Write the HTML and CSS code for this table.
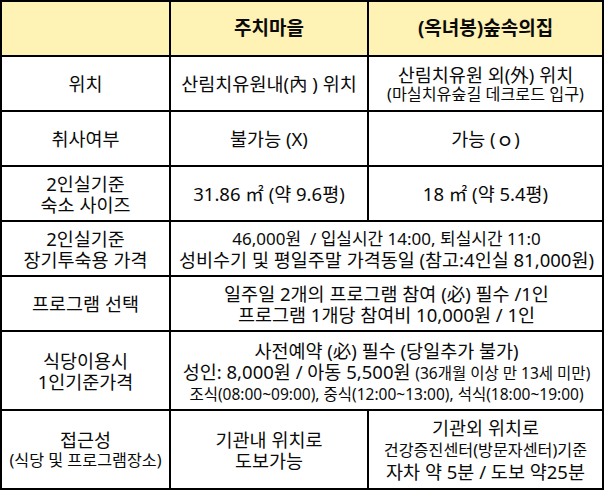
FILE: index.html
```html
<!DOCTYPE html>
<html lang="ko">
<head>
<meta charset="utf-8">
<link rel="stylesheet" href="styles.css">
</head>
<body>
<table class="info">
  <colgroup>
    <col class="c1">
    <col class="c2">
    <col class="c3">
  </colgroup>
  <tr class="r-head">
    <th class="head"></th>
    <th class="head">주치마을</th>
    <th class="head">(옥녀봉)숲속의집</th>
  </tr>
  <tr class="r-std">
    <td>위치</td>
    <td>산림치유원내(內 ) 위치</td>
    <td><div class="ln">산림치유원 외(外) 위치</div><div class="ln sm tight">(마실치유숲길 데크로드 입구)</div></td>
  </tr>
  <tr class="r-std">
    <td>취사여부</td>
    <td>불가능 (X)</td>
    <td>가능 (ｏ)</td>
  </tr>
  <tr class="r-std">
    <td><div class="ln">2인실기준</div><div class="ln">숙소 사이즈</div></td>
    <td>31.86 ㎡ (약 9.6평)</td>
    <td>18 ㎡ (약 5.4평)</td>
  </tr>
  <tr class="r-std">
    <td><div class="ln">2인실기준</div><div class="ln">장기투숙용 가격</div></td>
    <td colspan="2"><div class="ln md">46,000원&nbsp; / 입실시간 14:00, 퇴실시간 11:0</div><div class="ln">성비수기 및 평일주말 가격동일 (참고:4인실 81,000원)</div></td>
  </tr>
  <tr class="r-std">
    <td>프로그램 선택</td>
    <td colspan="2"><div class="ln">일주일 2개의 프로그램 참여 (必) 필수 /1인</div><div class="ln">프로그램 1개당 참여비 10,000원 / 1인</div></td>
  </tr>
  <tr class="r-tall">
    <td><div class="ln">식당이용시</div><div class="ln">1인기준가격</div></td>
    <td colspan="2" class="meal"><div class="ln">사전예약 (必) 필수 (당일추가 불가)</div><div class="ln">성인: 8,000원 / 아동 5,500원 <span class="note">(36개월 이상 만 13세 미만)</span></div><div class="ln xs">조식(08:00~09:00), 중식(12:00~13:00), 석식(18:00~19:00)</div></td>
  </tr>
  <tr class="r-tall">
    <td><div class="ln">접근성</div><div class="ln sm">(식당 및 프로그램장소)</div></td>
    <td><div class="ln">기관내 위치로</div><div class="ln">도보가능</div></td>
    <td class="roomy"><div class="ln">기관외 위치로</div><div class="ln sm">건강증진센터(방문자센터)기준</div><div class="ln">자차 약 5분 / 도보 약25분</div></td>
  </tr>
</table>
</body>
</html>
```

FILE: styles.css
```css
html, body {
  margin: 0;
  padding: 0;
  background: #ffffff;
}

body {
  font-family: "Noto Sans", "Noto Sans CJK KR", sans-serif;
  color: #0a0a0a;
}

.info {
  table-layout: fixed;
  width: 604px;
  border-collapse: separate;
  border-spacing: 0;
  border-left: 2px solid #000;
  border-top: 2px solid #000;
}

.c1 { width: 169px; }
.c2 { width: 198px; }
.c3 { width: 235px; }

.info th,
.info td {
  padding: 0;
  border-right: 2px solid #000;
  border-bottom: 2px solid #000;
  text-align: center;
  vertical-align: middle;
  font-size: 18.5px;
  line-height: 21px;
  white-space: nowrap;
}

.info th {
  font-weight: 700;
  font-size: 19px;
}

.head {
  background: #fff2b5;
}

.r-head { height: 55px; }
.r-std { height: 55px; }
.r-tall { height: 79px; }

.ln {
  line-height: 21px;
}

.md {
  font-size: 17px;
}

.sm {
  font-size: 16.2px;
}

.note {
  font-size: 15.5px;
}

.xs {
  font-size: 15.5px;
}

.tight {
  line-height: 19px;
}

.info td.meal {
  padding-top: 3px;
}

.roomy .ln {
  line-height: 22px;
}
```
